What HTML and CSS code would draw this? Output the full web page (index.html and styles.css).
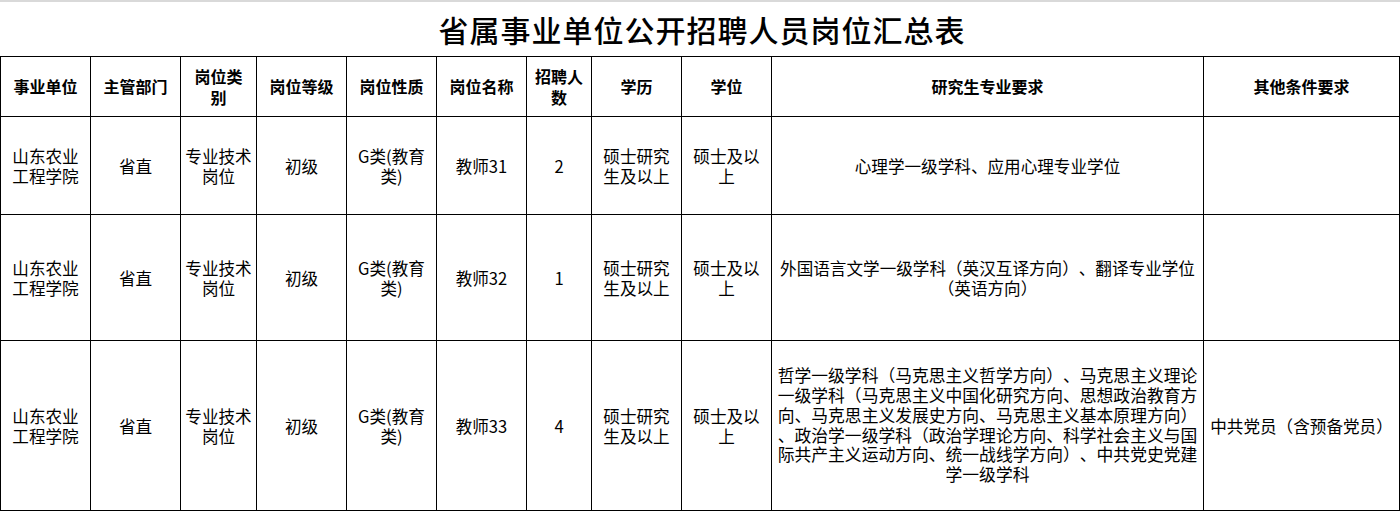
FILE: index.html
```html
<!DOCTYPE html>
<html lang="zh">
<head>
<meta charset="utf-8">
<title>省属事业单位公开招聘人员岗位汇总表</title>
<link rel="stylesheet" href="styles.css">
</head>
<body>
<div class="page">
  <div class="title-bar"><h1 class="title">省属事业单位公开招聘人员岗位汇总表</h1></div>
  <table class="sheet">
    <colgroup>
      <col class="c1"><col class="c2"><col class="c3"><col class="c4"><col class="c5"><col class="c6"><col class="c7"><col class="c8"><col class="c9"><col class="c10"><col class="c11">
    </colgroup>
    <thead>
      <tr class="head-row">
        <th>事业单位</th><th>主管部门</th><th>岗位类<br>别</th><th>岗位等级</th><th>岗位性质</th><th>岗位名称</th><th>招聘人<br>数</th><th>学历</th><th>学位</th><th>研究生专业要求</th><th>其他条件要求</th>
      </tr>
    </thead>
    <tbody>
      <tr class="row-a">
        <td>山东农业<br>工程学院</td><td>省直</td><td>专业技术<br>岗位</td><td>初级</td><td>G类(教育<br>类)</td><td>教师31</td><td>2</td><td>硕士研究<br>生及以上</td><td>硕士及以<br>上</td><td>心理学一级学科、应用心理专业学位</td><td></td>
      </tr>
      <tr class="row-b">
        <td>山东农业<br>工程学院</td><td>省直</td><td>专业技术<br>岗位</td><td>初级</td><td>G类(教育<br>类)</td><td>教师32</td><td>1</td><td>硕士研究<br>生及以上</td><td>硕士及以<br>上</td><td>外国语言文学一级学科（英汉互译方向）、翻译专业学位<br>（英语方向）</td><td></td>
      </tr>
      <tr class="row-c">
        <td>山东农业<br>工程学院</td><td>省直</td><td>专业技术<br>岗位</td><td>初级</td><td>G类(教育<br>类)</td><td>教师33</td><td>4</td><td>硕士研究<br>生及以上</td><td>硕士及以<br>上</td><td class="major">哲学一级学科（马克思主义哲学方向）、马克思主义理论<br>一级学科（马克思主义中国化研究方向、思想政治教育方<br>向、马克思主义发展史方向、马克思主义基本原理方向）<br>、政治学一级学科（政治学理论方向、科学社会主义与国<br>际共产主义运动方向、统一战线学方向）、中共党史党建<br>学一级学科</td><td>中共党员（含预备党员）</td>
      </tr>
    </tbody>
  </table>
</div>
</body>
</html>
```
FILE: styles.css
```css
html, body {
  margin: 0;
  padding: 0;
  background: #ffffff;
}
.page {
  width: 1400px;
  border-top: 2px solid #d9d9d9;
  font-family: "Noto Sans CJK SC", "Noto Sans", sans-serif;
  color: #000;
  text-spacing-trim: space-all;
  font-feature-settings: "halt" 0, "chws" 0;
}
.title-bar {
  height: 54px;
  display: flex;
  align-items: center;
  justify-content: center;
}
.title {
  margin: 0;
  font-size: 30px;
  font-weight: 500;
  line-height: 36px;
  letter-spacing: 1px;
  padding-left: 4px;
}
.sheet {
  border-collapse: collapse;
  table-layout: fixed;
  width: 1399px;
}
.c1 { width: 90px; }
.c2 { width: 90px; }
.c3 { width: 76px; }
.c4 { width: 90px; }
.c5 { width: 90px; }
.c6 { width: 90px; }
.c7 { width: 65px; }
.c8 { width: 90px; }
.c9 { width: 90px; }
.c10 { width: 432px; }
.c11 { width: 196px; }
.sheet th, .sheet td {
  border: 1px solid #000;
  padding: 0 2px;
  text-align: center;
  vertical-align: middle;
  font-size: 16px;
  line-height: 20px;
  white-space: nowrap;
  overflow: hidden;
}
.sheet th {
  font-weight: 700;
  font-size: 16px;
  line-height: 21px;
}
.sheet td {
  font-size: 16.6px;
}
.head-row { height: 60px; }
.row-a { height: 98px; }
.row-b { height: 126px; }
.row-c { height: 170px; }
.sheet td.major {
  line-height: 19.7px;
  font-size: 16.8px;
}
```
